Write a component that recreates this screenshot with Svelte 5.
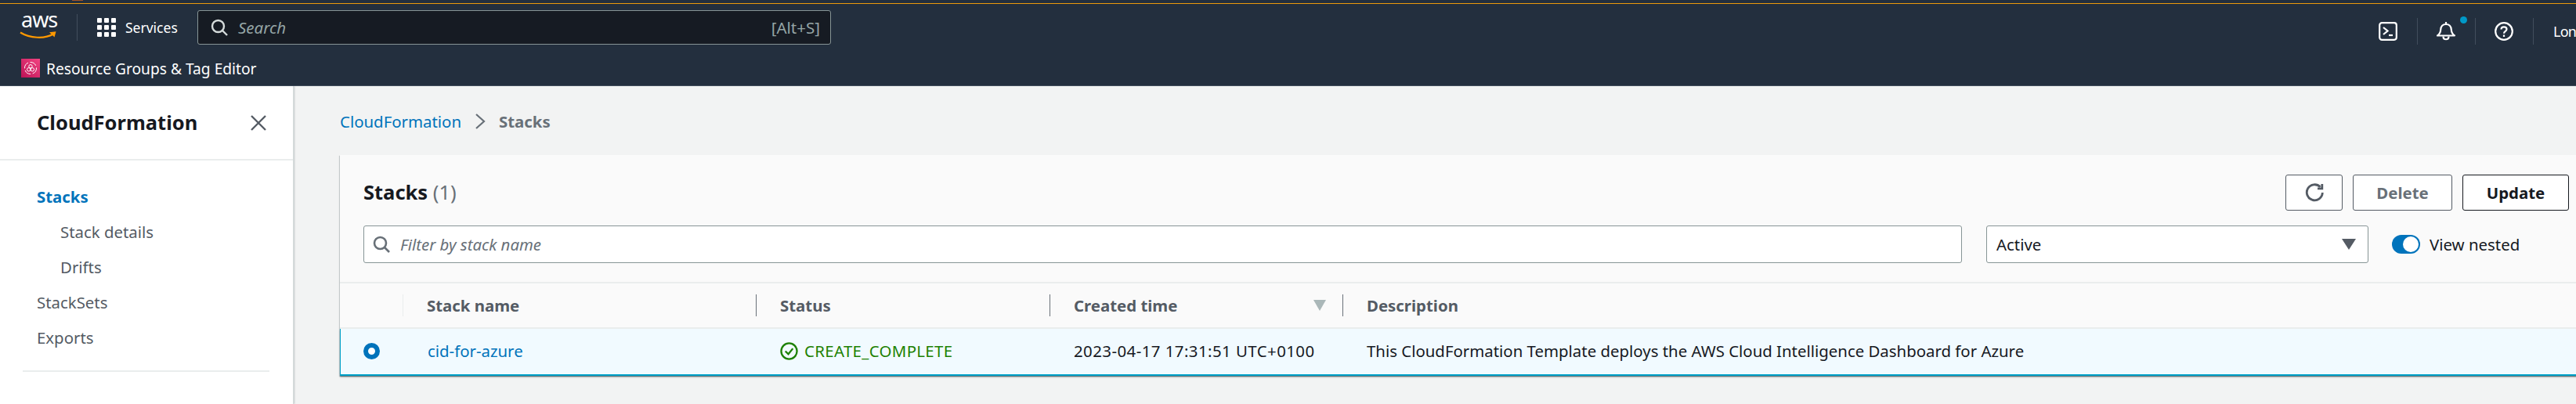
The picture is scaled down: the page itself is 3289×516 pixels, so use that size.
<script lang="ts">
  const navItems = [
    { label: "Stacks", active: true, sub: false },
    { label: "Stack details", active: false, sub: true },
    { label: "Drifts", active: false, sub: true },
    { label: "StackSets", active: false, sub: false },
    { label: "Exports", active: false, sub: false },
  ];

  const columns = ["Stack name", "Status", "Created time", "Description"];
</script>

<div class="page">
  <div class="top-strip"><span class="blip"></span></div>

  <header class="console-nav">
    <div class="nav-primary">
      <div class="logo">
        <span class="logo-text">aws</span>
        <svg class="smile" viewBox="0 0 48 12" width="48" height="12">
          <path d="M1 2.500C13 10 32 11 43 4.500" fill="none" stroke="#ff9900" stroke-width="2.200" />
          <path d="M38 2.200L46.500 1.200L44.500 8.500" fill="#ff9900" />
        </svg>
      </div>
      <span class="nav-rule logo-rule"></span>
      <svg class="grid-icon" viewBox="0 0 24 24" width="24" height="24" fill="#fff">
        <rect x="0" y="0" width="6" height="6" rx="1" />
        <rect x="9" y="0" width="6" height="6" rx="1" />
        <rect x="18" y="0" width="6" height="6" rx="1" />
        <rect x="0" y="9" width="6" height="6" rx="1" />
        <rect x="9" y="9" width="6" height="6" rx="1" />
        <rect x="18" y="9" width="6" height="6" rx="1" />
        <rect x="0" y="18" width="6" height="6" rx="1" />
        <rect x="9" y="18" width="6" height="6" rx="1" />
        <rect x="18" y="18" width="6" height="6" rx="1" />
      </svg>
      <span class="services">Services</span>
      <div class="global-search">
        <svg viewBox="0 0 22 22" width="22" height="22" fill="none" stroke="#d5dbdb" stroke-width="2.400">
          <circle cx="9.500" cy="9.500" r="7.500" />
          <path d="M15 15L21 21" />
        </svg>
        <span class="search-placeholder">Search</span>
        <span class="search-key">[Alt+S]</span>
      </div>
      <div class="nav-tools">
        <svg class="tool" viewBox="0 0 24 24" width="24" height="24" fill="none" stroke="#fff" stroke-width="2.200">
          <rect x="1.200" y="1.200" width="21.600" height="21.600" rx="3" />
          <path d="M6 7L11.500 11.500L6 16" />
          <path d="M13 17H18" />
        </svg>
        <span class="nav-rule"></span>
        <div class="bell">
          <svg viewBox="0 0 24 24" width="24" height="24" fill="none" stroke="#fff" stroke-width="2.200">
            <path d="M12 0V3" />
            <path d="M1 17.500C4 15.500 5 13 5.200 10C5.500 5.500 8 3 12 3C16 3 18.500 5.500 18.800 10C19 13 20 15.500 23 17.500Z" stroke-linejoin="round" />
            <path d="M8.500 18.500C8.500 23.500 15.500 23.500 15.500 18.500" />
          </svg>
          <span class="bell-dot"></span>
        </div>
        <span class="nav-rule"></span>
        <svg class="tool" viewBox="0 0 24 24" width="24" height="24" fill="none" stroke="#fff" stroke-width="2.200">
          <circle cx="12" cy="12" r="10.800" />
          <path d="M8.500 9.500C8.500 7.500 10 6.300 12 6.300C14 6.300 15.500 7.500 15.500 9.300C15.500 11.800 12 11.800 12 14.700" />
          <path d="M12 16.500V19" />
        </svg>
        <span class="nav-rule"></span>
        <span class="region">Lon</span>
      </div>
    </div>
    <div class="nav-secondary">
      <svg class="shortcut-icon" viewBox="0 0 24 24" width="24" height="24">
        <defs>
          <linearGradient id="rg" x1="0" y1="1" x2="1" y2="0">
            <stop offset="0" stop-color="#bc1356" />
            <stop offset="1" stop-color="#f34482" />
          </linearGradient>
        </defs>
        <rect width="24" height="24" fill="url(#rg)" />
        <g fill="none" stroke="#fff" stroke-width="1">
          <circle cx="12" cy="12" r="7.500" stroke-dasharray="9 2.500" />
          <circle cx="12" cy="9.800" r="2.200" />
          <circle cx="9.700" cy="13.800" r="2.200" />
          <circle cx="14.300" cy="13.800" r="2.200" />
        </g>
      </svg>
      <span>Resource Groups &amp; Tag Editor</span>
    </div>
  </header>

  <div class="body">
    <aside class="side-nav">
      <div class="side-header">
        <h2>CloudFormation</h2>
        <svg viewBox="0 0 22 22" width="22" height="22" fill="none" stroke="#545b64" stroke-width="2.400">
          <path d="M2 2L20 20M20 2L2 20" />
        </svg>
      </div>
      <ul class="side-list">
        {#each navItems as item}
          <li class:active={item.active} class:sub={item.sub}>{item.label}</li>
        {/each}
      </ul>
      <div class="side-rule"></div>
    </aside>

    <main class="content">
      <nav class="breadcrumbs">
        <a href="#top">CloudFormation</a>
        <svg viewBox="0 0 14 22" width="14" height="22" fill="none" stroke="#687078" stroke-width="2.200">
          <path d="M2 2L12 11L2 20" />
        </svg>
        <span>Stacks</span>
      </nav>

      <section class="card">
        <div class="card-head">
          <div class="title-row">
            <h1>Stacks <span class="count">(1)</span></h1>
            <div class="actions">
              <button class="btn refresh" aria-label="Refresh">
                <svg viewBox="0 0 24 24" width="24" height="24" fill="none" stroke="#545b64" stroke-width="2.800">
                  <path d="M19.500 4.800A10 10 0 1 0 22.300 12" />
                  <path d="M21.800 1V6.800H16" />
                </svg>
              </button>
              <button class="btn muted">Delete</button>
              <button class="btn strong">Update</button>
            </div>
          </div>
          <div class="filter-row">
            <div class="field filter">
              <svg viewBox="0 0 22 22" width="22" height="22" fill="none" stroke="#687078" stroke-width="2.600">
                <circle cx="9.500" cy="9.500" r="7.500" />
                <path d="M15 15L21 21" />
              </svg>
              <span>Filter by stack name</span>
            </div>
            <div class="field select">
              <span>Active</span>
              <span class="caret"></span>
            </div>
            <div class="toggle-wrap">
              <span class="toggle"><span class="knob"></span></span>
              <span>View nested</span>
            </div>
          </div>
        </div>

        <div class="table-head">
          <div class="cell first"></div>
          {#each columns as col, i}
            <div class="cell" class:sorted={i === 2}>
              <span>{col}</span>
              {#if i === 2}<span class="sort-caret"></span>{/if}
            </div>
          {/each}
        </div>

        <div class="table-row">
          <div class="cell first"><span class="radio"></span></div>
          <div class="cell"><a href="#top">cid-for-azure</a></div>
          <div class="cell status">
            <svg viewBox="0 0 24 24" width="23" height="23" fill="none" stroke="#1d8102" stroke-width="2.400">
              <circle cx="12" cy="12" r="10.500" />
              <path d="M7 12L11 16L17 8.500" />
            </svg>
            <span>CREATE_COMPLETE</span>
          </div>
          <div class="cell date">2023-04-17 17:31:51 UTC+0100</div>
          <div class="cell">This CloudFormation Template deploys the AWS Cloud Intelligence Dashboard for Azure</div>
        </div>
      </section>
    </main>
  </div>
</div>

<style>
  :global(body) {
    margin: 0;
  }
  .page {
    width: 3289px;
    height: 516px;
    overflow: hidden;
    position: relative;
    background: #f2f3f3;
    font-family: "Noto Sans", "Liberation Sans", sans-serif;
    font-size: 20.4px;
    color: #16191f;
  }
  .top-strip {
    height: 4px;
    background: #232f3e;
    border-bottom: 1px solid #ec9a0b;
    position: relative;
  }
  .blip {
    position: absolute;
    left: 92px;
    top: 0;
    width: 14px;
    height: 1px;
    background: #a2552a;
  }
  .console-nav {
    background: #232f3e;
    height: 104px;
    border-bottom: 1px solid #414d5c;
    color: #fff;
  }
  .nav-primary {
    height: 60px;
    display: flex;
    align-items: center;
    position: relative;
  }
  .logo {
    width: 48px;
    margin-left: 25px;
    position: relative;
    height: 32px;
  }
  .logo-text {
    position: absolute;
    left: 2px;
    top: -12px;
    font-size: 27px;
    line-height: 36px;
    letter-spacing: -1px;
  }
  .smile {
    position: absolute;
    left: 0;
    top: 20px;
  }
  .nav-rule {
    width: 1px;
    height: 34px;
    background: #414d5c;
  }
  .logo-rule {
    margin-left: 25px;
  }
  .grid-icon {
    margin-left: 25px;
  }
  .services {
    margin-left: 12px;
    width: 66px;
    font-size: 17.5px;
    white-space: nowrap;
  }
  .global-search {
    margin-left: 26px;
    width: 809px;
    height: 44px;
    box-sizing: border-box;
    background: #161b23;
    border: 1px solid #879596;
    border-radius: 3px;
    display: flex;
    align-items: center;
    padding: 0 13px 0 16px;
  }
  .search-placeholder {
    margin-left: 13px;
    font-style: italic;
    font-size: 20.5px;
    color: #95a5a6;
  }
  .search-key {
    margin-left: auto;
    font-size: 20.5px;
    color: #95a5a6;
  }
  .nav-tools {
    position: absolute;
    left: 3037px;
    top: 18px;
    display: flex;
    align-items: center;
    height: 34px;
  }
  .tool {
    display: block;
  }
  .nav-tools .nav-rule {
    margin: 0 24px 0 25px;
  }
  .bell {
    position: relative;
    width: 24px;
    height: 24px;
  }
  .bell-dot {
    position: absolute;
    right: -15px;
    top: -7px;
    width: 9px;
    height: 9px;
    border-radius: 50%;
    background: #0099c8;
  }
  .region {
    margin-left: 1px;
    font-size: 18px;
    letter-spacing: -0.8px;
  }
  .nav-secondary {
    height: 44px;
    display: flex;
    align-items: center;
    gap: 8px;
    padding-left: 27px;
    font-size: 19.2px;
  }
  .body {
    display: flex;
    height: 406px;
  }
  .side-nav {
    width: 374px;
    background: #fff;
    border-right: 1px solid #d5dbdb;
    box-shadow: 1px 0 2px rgba(0, 28, 36, 0.2);
    flex-shrink: 0;
    height: 100%;
    position: relative;
  }
  .side-header {
    height: 93px;
    border-bottom: 2px solid #eaeded;
    display: flex;
    align-items: center;
    justify-content: space-between;
    padding: 0 33px 0 47px;
  }
  .side-header h2 {
    margin: 0 0 2px;
    font-size: 25.500px;
    font-weight: 700;
  }
  .side-list {
    list-style: none;
    margin: 24px 0 0;
    padding: 0 0 0 47px;
  }
  .side-list li {
    height: 45px;
    line-height: 44px;
    color: #545b64;
  }
  .side-list li.active {
    color: #0073bb;
    font-weight: 700;
  }
  .side-list li.sub {
    padding-left: 30px;
  }
  .side-rule {
    margin: 19px 30px 0 29px;
    height: 2px;
    background: #eaeded;
  }
  .content {
    flex: 1;
    min-width: 0;
    padding-left: 59px;
  }
  .breadcrumbs {
    height: 88px;
    box-sizing: border-box;
    padding-top: 2px;
    display: flex;
    align-items: center;
    gap: 17px;
    color: #687078;
    font-weight: 700;
  }
  .breadcrumbs a {
    color: #0073bb;
    font-weight: 400;
    text-decoration: none;
  }
  .card {
    margin-right: -21px;
    background: #fafafa;
    box-shadow: 0 1px 1px 0 rgba(0, 28, 36, 0.3), 1px 1px 1px 0 rgba(0, 28, 36, 0.15), -1px 1px 1px 0 rgba(0, 28, 36, 0.15);
  }
  .card-head {
    padding: 25px 30px 24px;
    border-bottom: 2px solid #eaeded;
  }
  .title-row {
    display: flex;
    justify-content: space-between;
    align-items: center;
    height: 46px;
  }
  .title-row h1 {
    margin: 0 0 2px;
    font-size: 25.500px;
    font-weight: 700;
  }
  .count {
    font-weight: 400;
    color: #687078;
  }
  .actions {
    display: flex;
    gap: 13px;
  }
  .btn {
    height: 46px;
    box-sizing: border-box;
    background: #fff;
    border: 1px solid #545b64;
    border-radius: 3px;
    font-family: inherit;
    font-size: 20.4px;
    font-weight: 700;
    padding: 0;
    display: flex;
    align-items: center;
    justify-content: center;
  }
  .refresh {
    width: 73px;
  }
  .muted {
    width: 127px;
    color: #687078;
  }
  .strong {
    width: 136px;
    border-color: #16191f;
    color: #16191f;
  }
  .filter-row {
    margin-top: 19px;
    display: flex;
    align-items: center;
  }
  .field {
    height: 48px;
    box-sizing: border-box;
    background: #fff;
    border: 1px solid #879596;
    border-radius: 3px;
    display: flex;
    align-items: center;
  }
  .filter {
    width: 2041px;
    padding-left: 11px;
    gap: 13px;
    color: #687078;
    font-style: italic;
  }
  .select {
    width: 488px;
    margin-left: 31px;
    padding: 0 15px 0 12px;
    justify-content: space-between;
  }
  .caret {
    width: 0;
    height: 0;
    border-left: 9px solid transparent;
    border-right: 9px solid transparent;
    border-top: 14px solid #545b64;
  }
  .toggle-wrap {
    margin-left: 30px;
    display: flex;
    align-items: center;
    gap: 12px;
  }
  .toggle {
    width: 36px;
    height: 24px;
    border-radius: 12px;
    background: #0073bb;
    position: relative;
  }
  .knob {
    position: absolute;
    right: 2px;
    top: 2px;
    width: 20px;
    height: 20px;
    border-radius: 50%;
    background: #fff;
  }
  .table-head,
  .table-row {
    display: grid;
    grid-template-columns: 81px 450px 375px 374px 1fr;
    align-items: center;
  }
  .table-head {
    height: 58px;
    border-bottom: 2px solid #eaeded;
    box-sizing: border-box;
    color: #545b64;
    font-weight: 700;
  }
  .table-head .cell {
    height: 28px;
    line-height: 26px;
    box-sizing: border-box;
    padding-left: 30px;
    border-left: 1px solid #687078;
    display: flex;
    align-items: center;
    justify-content: space-between;
  }
  .table-head .cell.first {
    border-left: 0;
    border-right: 1px solid #eaeded;
    padding: 0;
  }
  .table-head .cell:nth-child(2) {
    border-left: 0;
  }
  .sort-caret {
    width: 0;
    height: 0;
    margin-right: 21px;
    border-left: 8px solid transparent;
    border-right: 8px solid transparent;
    border-top: 14px solid #aab7b8;
  }
  .table-row {
    height: 60px;
    box-sizing: border-box;
    padding-bottom: 2px;
    background: #f1faff;
    border-left: 1px solid #00a1c9;
    border-bottom: 2px solid #00a1c9;
    box-shadow: 0 2px 2px rgba(0, 28, 36, 0.2);
  }
  .table-row .cell {
    padding-left: 30px;
  }
  .table-row .cell.first {
    padding-left: 29px;
    display: flex;
  }
  .radio {
    width: 21px;
    height: 21px;
    box-sizing: border-box;
    border: 6px solid #0073bb;
    border-radius: 50%;
    background: #fff;
  }
  .table-row a {
    color: #0073bb;
    text-decoration: none;
  }
  .status {
    display: flex;
    align-items: center;
    gap: 8px;
    color: #1d8102;
    letter-spacing: 0.35px;
  }
  .date {
    letter-spacing: 0.45px;
  }
</style>
